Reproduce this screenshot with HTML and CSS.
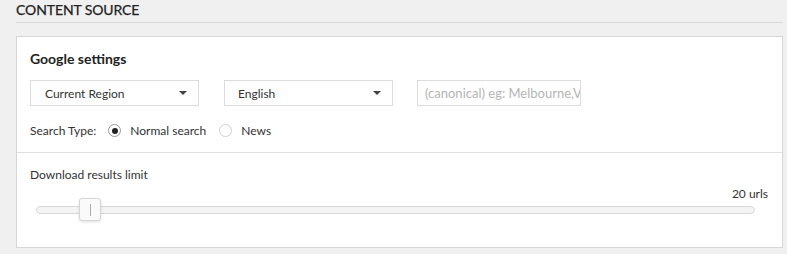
FILE: index.html
```html
<!DOCTYPE html>
<html>
<head>
<meta charset="utf-8">
<link rel="stylesheet" href="styles.css">
</head>
<body>
<div class="page">
  <h2 class="section-title">CONTENT SOURCE</h2>
  <div class="card">
    <div class="card-top">
      <h3 class="card-heading">Google settings</h3>
      <div class="fields">
        <div class="select sel-region"><span>Current Region</span><i class="caret"></i></div>
        <div class="select sel-lang"><span>English</span><i class="caret"></i></div>
        <div class="text-input"><span class="placeholder">(canonical) eg: Melbourne,Victoria</span></div>
      </div>
      <div class="search-type">
        <span class="label">Search Type:</span>
        <span class="radio checked"></span><span class="radio-label">Normal search</span>
        <span class="radio"></span><span class="radio-label">News</span>
      </div>
    </div>
    <div class="card-bottom">
      <div class="limit-label">Download results limit</div>
      <div class="limit-value">20 urls</div>
      <div class="slider">
        <div class="track"></div>
        <div class="handle"><i></i></div>
      </div>
    </div>
  </div>
</div>
</body>
</html>
```

FILE: styles.css
```css
html, body {
  margin: 0;
  padding: 0;
  background: #f0f0f0;
  font-family: Lato, "Open Sans", sans-serif;
  color: #333;
}
.page {
  margin-left: 16px;
  width: 767px;
}
.section-title {
  margin: 0;
  font-size: 14px;
  font-weight: 400;
  line-height: 18px;
  padding-top: 1px;
  padding-bottom: 3px;
  border-bottom: 1px solid #d9d9d9;
  color: #222;
  -webkit-text-stroke: 0.25px #222;
  letter-spacing: -0.1px;
}
.card {
  margin-top: 13px;
  width: 765px;
  background: #fff;
  border: 1px solid #d6d6d6;
}
.card-top {
  padding: 13px 13px 0 13px;
  height: 102px;
  border-bottom: 1px solid #e0e0e0;
}
.card-heading {
  margin: 0;
  font-size: 14px;
  font-weight: 700;
  line-height: 18px;
  color: #222;
}
.fields {
  display: flex;
  margin-top: 12px;
}
.select {
  box-sizing: border-box;
  height: 26px;
  border: 1px solid #dcdcdc;
  display: flex;
  align-items: center;
  justify-content: space-between;
  padding: 0 11px 0 14px;
  font-size: 12px;
  color: #333;
}
.sel-region { width: 169px; margin-right: 25px; }
.sel-lang { width: 169px; margin-right: 24px; padding-left: 13px; }
.caret {
  display: block;
  width: 0;
  height: 0;
  border-left: 4px solid transparent;
  border-right: 4px solid transparent;
  border-top: 4px solid #444;
}
.text-input {
  box-sizing: border-box;
  width: 164px;
  height: 26px;
  border: 1px solid #dcdcdc;
  display: flex;
  align-items: center;
  padding-left: 7px;
  overflow: hidden;
  white-space: nowrap;
  font-size: 13px;
}
.placeholder { color: #b5b5b5; }
.search-type {
  display: flex;
  align-items: center;
  margin-top: 17px;
  font-size: 12px;
  color: #333;
}
.search-type .label { margin-right: 12px; }
.radio {
  box-sizing: border-box;
  width: 13px;
  height: 13px;
  border-radius: 50%;
  border: 1px solid #cfcfcf;
  background: #fff;
  display: inline-flex;
  align-items: center;
  justify-content: center;
  margin-right: 9px;
}
.radio.checked { border-color: #999; }
.radio.checked::after {
  content: "";
  width: 6px;
  height: 6px;
  border-radius: 50%;
  background: #222;
}
.radio-label { margin-right: 13px; }
.card-bottom {
  padding: 14px 13px 0 13px;
  height: 80px;
}
.limit-label {
  font-size: 12px;
  line-height: 16px;
  color: #333;
}
.limit-value {
  text-align: right;
  font-size: 12px;
  line-height: 14px;
  margin-top: 4px;
  padding-right: 1px;
  color: #333;
}
.slider {
  position: relative;
  margin: -3px 14px 0 6px;
  height: 24px;
}
.track {
  position: absolute;
  left: 0;
  right: 0;
  top: 8px;
  height: 8px;
  box-sizing: border-box;
  border: 1px solid #d8d8d8;
  border-radius: 4px;
  background: #f4f4f4;
}
.handle {
  position: absolute;
  left: 43px;
  top: 0;
  width: 22px;
  height: 23px;
  box-sizing: border-box;
  border: 1px solid #d6d6d6;
  border-radius: 3px;
  background: #fafafa;
  box-shadow: 0 1px 3px rgba(0,0,0,0.12);
  display: flex;
  justify-content: center;
  align-items: center;
}
.handle i {
  display: block;
  width: 1px;
  height: 12px;
  background: #aaa;
}
```
